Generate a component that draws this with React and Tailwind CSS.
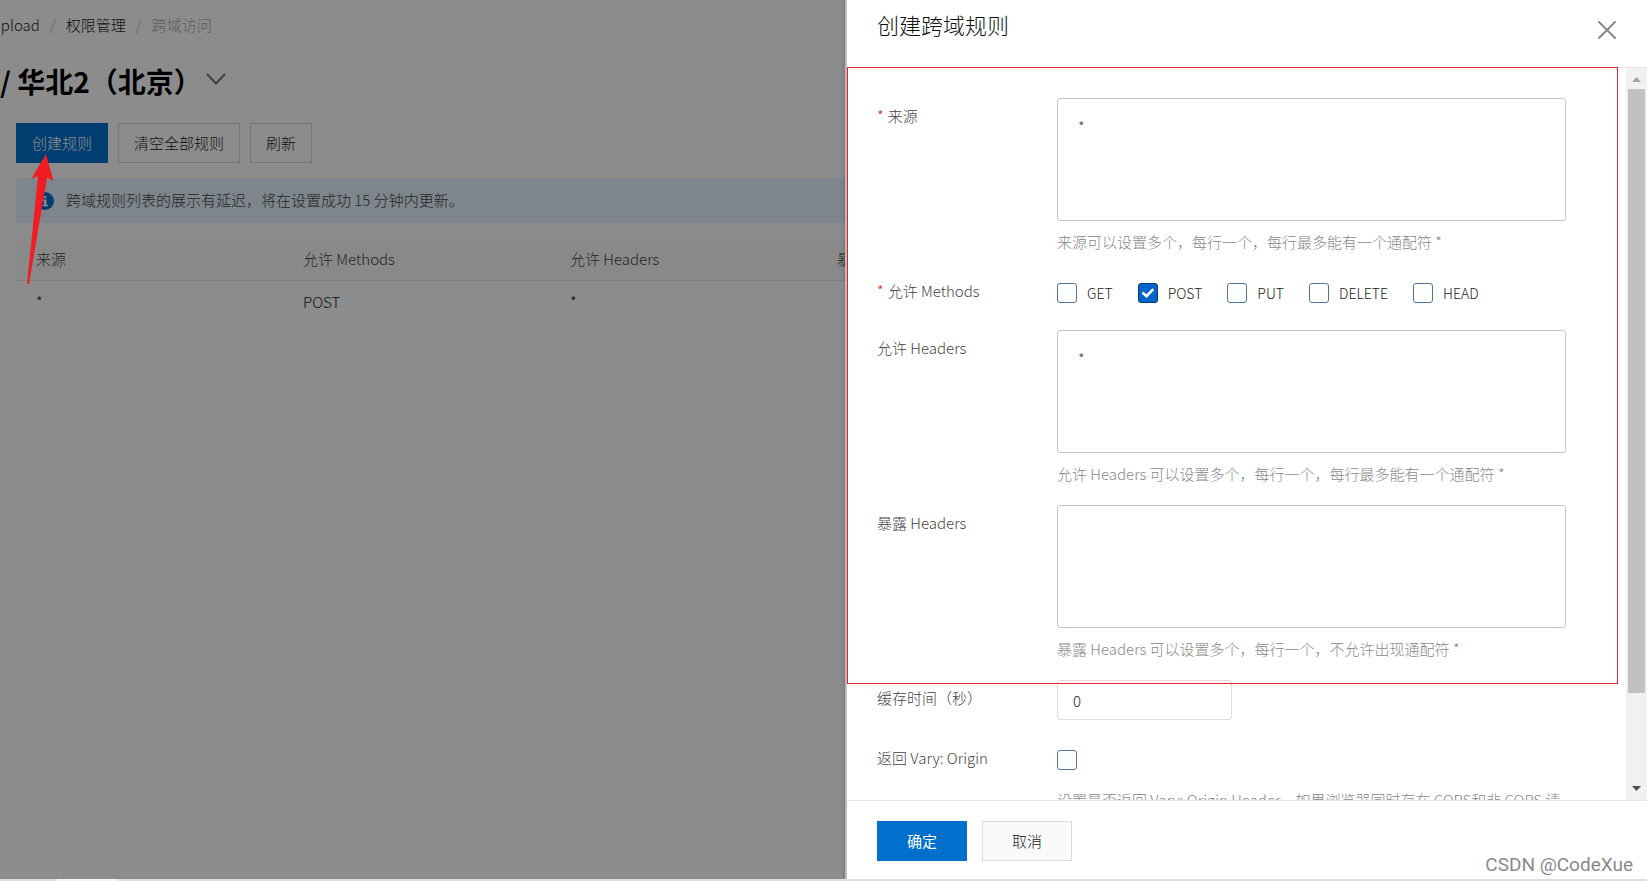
import { useState } from 'react'

const METHODS = ['GET', 'POST', 'PUT', 'DELETE', 'HEAD']

const RULES = [{ origin: '*', methods: 'POST', headers: '*', expose: '' }]

function Checkbox({ id, label, checked, onChange }) {
  return (
    <label htmlFor={id} className="flex items-center gap-2.5 text-sm text-[#222]">
      <span className="relative flex size-5">
        <input
          id={id}
          type="checkbox"
          aria-label={label ? undefined : '返回 Vary: Origin'}
          checked={checked}
          onChange={onChange}
          className="size-5 appearance-none rounded-[3px] border border-[#4f74a3] bg-white checked:border-[#003e80] checked:bg-[#0064c8]"
        />
        {checked && (
          <svg viewBox="0 0 20 20" className="pointer-events-none absolute inset-0 size-5" fill="none">
            <path d="M4.500 9.500 8.500 13.200 15.300 6.200" stroke="#fff" strokeWidth="2.6" />
          </svg>
        )}
      </span>
      {label}
    </label>
  )
}

function Row({ label, htmlFor, required, children }) {
  return (
    <div className="flex">
      <label htmlFor={htmlFor} className="w-45 shrink-0 pt-2 leading-5 text-[#444]">
        {required && <span className="mr-1 text-[#e0202a]">*</span>}
        {label}
      </label>
      <div className="min-w-0 flex-1">{children}</div>
    </div>
  )
}

function TextRow({ id, label, required, value, hint }) {
  return (
    <Row label={label} htmlFor={id} required={required}>
      <textarea
        id={id}
        defaultValue={value}
        className="block h-[123px] w-full resize-none rounded-[3px] border border-[#c0c6cc] px-5 py-[18px] leading-5 text-[#444] outline-none"
      />
      <p className="mt-[11px] pb-px leading-5 text-[#888]">{hint}</p>
    </Row>
  )
}

function RulesPage() {
  return (
    <main className="px-4 pt-[13px] text-[#222]">
      <nav className="-ml-6 flex gap-2.5 leading-6">
        <a href="#upload">upload</a>
        <span className="text-[#bbb]">/</span>
        <a href="#auth">权限管理</a>
        <span className="text-[#bbb]">/</span>
        <span className="text-[#aaa]">跨域访问</span>
      </nav>

      <div className="mt-6 -ml-4 flex items-center">
        <h1 className="text-[28px] leading-10 font-bold text-black">/ 华北2（北京）</h1>
        <svg viewBox="0 0 20 12" className="mb-1 ml-1 h-3 w-5" fill="none">
          <path d="M1 1 10 10.500 19 1" stroke="#777" strokeWidth="2" />
        </svg>
      </div>

      <div className="mt-[22px] flex gap-2.5">
        <button className="h-10 border border-[#0070cc] bg-[#0070cc] px-[15px] text-white">创建规则</button>
        <button className="h-10 border border-[#d8d8d8] px-[15px]">清空全部规则</button>
        <button className="h-10 border border-[#d8d8d8] px-[15px]">刷新</button>
      </div>

      <div className="mt-[15px] flex h-[45px] items-center gap-3 bg-[#e5f2ff] pl-5 text-[#444]">
        <svg viewBox="0 0 18 18" className="size-[18px]">
          <circle cx="9" cy="9" r="9" fill="#0070cc" />
          <path d="M8 4h2.400v2.200H8zM7 7.500h3.400V13H12v1.200H6.800V13H8V8.700H7z" fill="#fff" />
        </svg>
        跨域规则列表的展示有延迟，将在设置成功 15 分钟内更新。
      </div>

      <table className="mt-4 w-full table-fixed text-left">
        <thead>
          <tr className="h-[41px] border-b border-[#e5e5e5] bg-[#fafafa] text-[#444]">
            <th className="w-[267px] pl-5 font-light">来源</th>
            <th className="w-[267px] pl-5 font-light">允许 Methods</th>
            <th className="w-[267px] pl-5 font-light">允许 Headers</th>
            <th className="pl-5 font-light">暴露 Headers</th>
          </tr>
        </thead>
        <tbody>
          {RULES.map((r, i) => (
            <tr key={i} className="h-[43px]">
              <td className="pl-5">{r.origin}</td>
              <td className="pl-5">{r.methods}</td>
              <td className="pl-5">{r.headers}</td>
              <td className="pl-5">{r.expose}</td>
            </tr>
          ))}
        </tbody>
      </table>
    </main>
  )
}

function Scrollbar() {
  return (
    <div className="flex w-[21px] flex-col items-center bg-[#f1f1f1]">
      <svg viewBox="0 0 21 21" className="h-[21px] w-[21px] shrink-0">
        <path d="M6 14h9l-4.500-5z" fill="#a3a3a3" />
      </svg>
      <div className="w-[17px] grow-[604] basis-0 bg-[#c1c1c1]" />
      <div className="grow-[86] basis-0" />
      <svg viewBox="0 0 21 21" className="h-[21px] w-[21px] shrink-0">
        <path d="M6 7h9l-4.500 5z" fill="#505050" />
      </svg>
    </div>
  )
}

function RuleDrawer() {
  const [methods, setMethods] = useState(['POST'])
  const [vary, setVary] = useState(false)

  const toggle = (m) =>
    setMethods(methods.includes(m) ? methods.filter((x) => x !== m) : [...methods, m])

  return (
    <aside className="absolute inset-y-0 right-0 flex w-[802px] max-w-full flex-col border-l-2 border-[#bbb] bg-white shadow-[-1px_0_3px_rgba(0,0,0,0.15)]">
      <header className="flex h-[67px] shrink-0 items-start justify-between pt-1.5 pr-[31px] pl-[30px]">
        <h2 className="text-[22px] leading-9 text-[#111]">创建跨域规则</h2>
        <button aria-label="关闭" className="mt-[15px]">
          <svg viewBox="0 0 18 18" className="size-[18px]" fill="none">
            <path d="M1 1 17 17M17 1 1 17" stroke="#888" strokeWidth="2" strokeLinecap="round" />
          </svg>
        </button>
      </header>

      <div className="flex min-h-0 flex-1 border-y border-[#e8e8e8]">
        <form className="flex min-w-0 flex-1 flex-col gap-5 overflow-hidden pt-[30px] pr-[60px] pl-[30px]">
          <TextRow id="origin" label="来源" required value="*" hint="来源可以设置多个，每行一个，每行最多能有一个通配符 *" />
          <Row label="允许 Methods" htmlFor="m-GET" required>
            <div className="flex h-[37px] items-start gap-[25px] pt-2.5">
              {METHODS.map((m) => (
                <Checkbox key={m} id={`m-${m}`} label={m} checked={methods.includes(m)} onChange={() => toggle(m)} />
              ))}
            </div>
          </Row>
          <TextRow id="headers" label="允许 Headers" value="*" hint="允许 Headers 可以设置多个，每行一个，每行最多能有一个通配符 *" />
          <TextRow id="expose" label="暴露 Headers" value="" hint="暴露 Headers 可以设置多个，每行一个，不允许出现通配符 *" />
          <Row label="缓存时间（秒）" htmlFor="max-age">
            <input
              id="max-age"
              defaultValue="0"
              className="block h-10 w-[175px] rounded-[3px] border border-[#ddd] px-[15px] text-[#222] outline-none"
            />
          </Row>
          <Row label="返回 Vary: Origin" htmlFor="vary">
            <div className="flex h-10 items-center">
              <Checkbox id="vary" checked={vary} onChange={() => setVary(!vary)} />
            </div>
            <p className="mt-2.5 leading-5 text-[#888]">
              设置是否返回 Vary: Origin Header。如果浏览器同时存在 CORS和非 CORS 请求，请启用该选项。
            </p>
          </Row>
        </form>
        <Scrollbar />
      </div>

      <footer className="flex h-20 shrink-0 items-start gap-[15px] pt-5 pl-[30px]">
        <button className="h-10 w-[90px] bg-[#0070cc] font-normal text-white">确定</button>
        <button className="h-10 w-[90px] border border-[#ddd] bg-[#fafafa] text-[#222]">取消</button>
      </footer>

      {/* Highlight around the fields to fill in */}
      <div className="pointer-events-none absolute top-[67px] right-[29px] left-0 h-[617px] border border-[#e5222a]" />
    </aside>
  )
}

export default function App() {
  return (
    <div className="relative h-screen overflow-hidden bg-white font-['Noto_Sans_CJK_SC',sans-serif] text-[15px] font-light">
      <RulesPage />
      <div className="absolute inset-0 bg-black/45" />
      <RuleDrawer />

      {/* Arrow pointing at the create button */}
      <svg viewBox="0 0 28 132" className="pointer-events-none absolute top-[153px] left-[27px] h-[132px] w-7">
        <path d="M19 1 26.500 28 20 24.500 2 131H0L11 23.500 4.500 25.500Z" fill="#f01c22" />
      </svg>

      {/* Window edge under the page */}
      <div className="absolute inset-x-0 bottom-0 flex h-0.5 bg-[#dedede] pl-[57px]">
        <div className="w-[61px] bg-[#f3f3f3]" />
      </div>

      <div className="pointer-events-none absolute right-3.5 bottom-0.5 font-['Roboto',sans-serif] text-[19px] leading-7 font-normal text-[#8a8a8a]">
        CSDN @CodeXue
      </div>
    </div>
  )
}
